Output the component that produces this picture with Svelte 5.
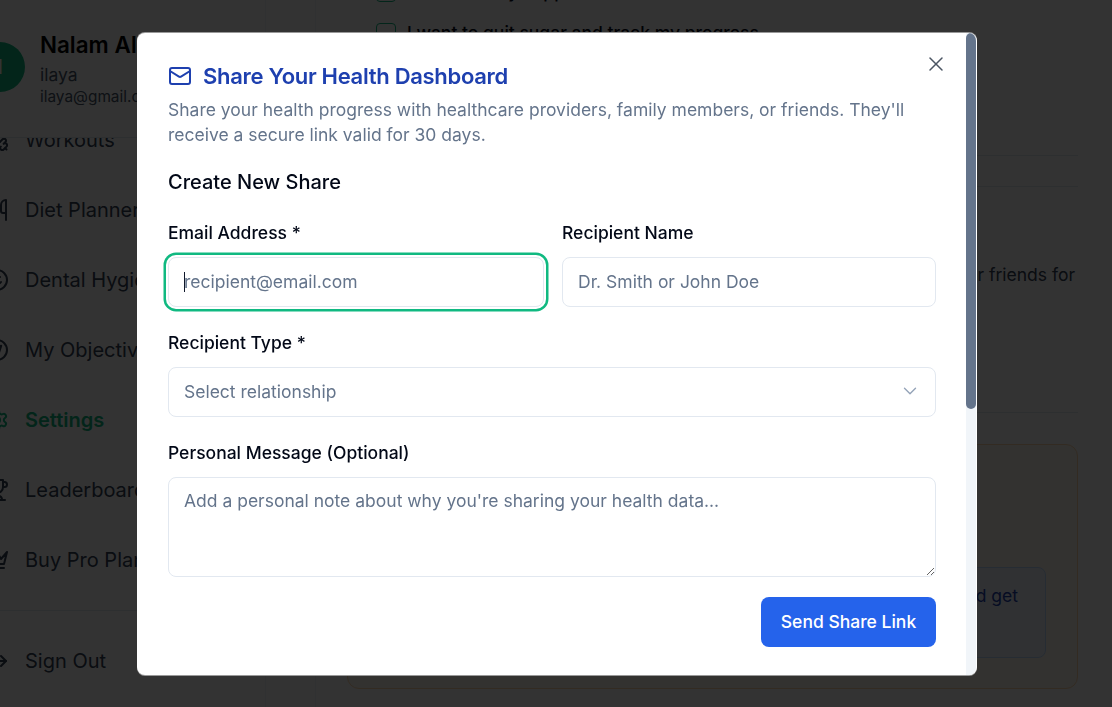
<script>
  const nav = [
    { label: 'Workouts', d: ['M14.4 14.4 9.6 9.6','M18.657 21.485a2 2 0 1 1-2.829-2.828l-1.767 1.768a2 2 0 1 1-2.829-2.829l6.364-6.364a2 2 0 1 1 2.829 2.829l-1.768 1.767a2 2 0 1 1 2.828 2.829z','m21.5 21.5-1.4-1.4','M3.9 3.9 2.5 2.5','M6.404 12.768a2 2 0 1 1-2.829-2.829l1.768-1.767a2 2 0 1 1-2.828-2.829l2.828-2.828a2 2 0 1 1 2.829 2.828l1.767-1.768a2 2 0 1 1 2.829 2.829z'] },
    { label: 'Diet Planner', d: ['M3 2v7c0 1.1.9 2 2 2h4a2 2 0 0 0 2-2V2','M7 2v20','M21 15V2a5 5 0 0 0-5 5v6c0 1.1.9 2 2 2h3Zm0 0v7'] },
    { label: 'Dental Hygiene', d: ['M12 2a10 10 0 1 0 0 20a10 10 0 1 0 0-20z','M8 14s1.5 2 4 2 4-2 4-2','M9 9h.01','M15 9h.01'] },
    { label: 'My Objectives', d: ['M12 2a10 10 0 1 0 0 20a10 10 0 1 0 0-20z','m16.24 7.76-2.12 6.36-6.36 2.12 2.12-6.36 6.36-2.12z'] },
    { label: 'Settings', active: true, d: ['M12.22 2h-.44a2 2 0 0 0-2 2v.18a2 2 0 0 1-1 1.73l-.43.25a2 2 0 0 1-2 0l-.15-.08a2 2 0 0 0-2.73.73l-.22.38a2 2 0 0 0 .73 2.73l.15.1a2 2 0 0 1 1 1.72v.51a2 2 0 0 1-1 1.74l-.15.09a2 2 0 0 0-.73 2.73l.22.38a2 2 0 0 0 2.73.73l.15-.08a2 2 0 0 1 2 0l.43.25a2 2 0 0 1 1 1.73V20a2 2 0 0 0 2 2h.44a2 2 0 0 0 2-2v-.18a2 2 0 0 1 1-1.73l.43-.25a2 2 0 0 1 2 0l.15.08a2 2 0 0 0 2.73-.73l.22-.39a2 2 0 0 0-.73-2.73l-.15-.08a2 2 0 0 1-1-1.74v-.5a2 2 0 0 1 1-1.74l.15-.09a2 2 0 0 0 .73-2.73l-.22-.38a2 2 0 0 0-2.73-.73l-.15.08a2 2 0 0 1-2 0l-.43-.25a2 2 0 0 1-1-1.73V4a2 2 0 0 0-2-2z','M12 9a3 3 0 1 0 0 6a3 3 0 1 0 0-6z'] },
    { label: 'Leaderboard', d: ['M6 9H4.5a2.5 2.5 0 0 1 0-5H6','M18 9h1.5a2.5 2.5 0 0 0 0-5H18','M4 22h16','M10 14.66V17c0 .55-.47.98-.97 1.21C7.85 18.75 7 20.24 7 22','M14 14.66V17c0 .55.47.98.97 1.21C16.15 18.75 17 20.24 17 22','M18 2H6v7a6 6 0 0 0 12 0V2Z'] },
    { label: 'Buy Pro Plan', d: ['m2 4 3 12h14l3-12-6 7-4-7-4 7-6-7zm3 16h14'] }
  ];
</script>

<div class="page">
  <aside class="sidebar">
    <div class="profile">
      <div class="avatar">I</div>
      <div class="who">
        <div class="name">Nalam AI User</div>
        <div class="user">ilaya</div>
        <div class="mail">ilaya@gmail.com</div>
      </div>
    </div>
    <nav class="nav">
      {#each nav as item}
        <div class="item" class:active={item.active}>
          <svg viewBox="0 0 24 24" width="24" height="24" fill="none" stroke="currentColor" stroke-width="2" stroke-linecap="round" stroke-linejoin="round">
            {#each item.d as d}<path {d} />{/each}
          </svg>
          <span>{item.label}</span>
        </div>
      {/each}
    </nav>
    <div class="foot">
      <div class="item">
        <svg viewBox="0 0 24 24" width="24" height="24" fill="none" stroke="currentColor" stroke-width="2" stroke-linecap="round" stroke-linejoin="round">
          <path d="M9 21H5a2 2 0 0 1-2-2V5a2 2 0 0 1 2-2h4" /><path d="m16 17 5-5-5-5" /><path d="M21 12H9" />
        </svg>
        <span>Sign Out</span>
      </div>
    </div>
  </aside>

  <main class="main">
    <div class="checks">
      <label class="check"><span class="box"></span><span>I want to stay happier</span></label>
      <label class="check"><span class="box"></span><span>I want to quit sugar and track my progress</span></label>
    </div>
    <div class="rule first"></div>
    <div class="rule second"></div>
    <p class="lead">Share your health progress with healthcare providers or friends for</p>
    <div class="rule third"></div>
    <section class="card">
      <div class="note">Share your dashboard and get</div>
    </section>
  </main>
</div>

<div class="overlay"></div>

<div class="modal" role="dialog" aria-modal="true">
  <div class="body">
    <button class="close" aria-label="Close">
      <svg viewBox="0 0 24 24" width="24" height="24" fill="none" stroke="currentColor" stroke-width="1.5" stroke-linecap="round" stroke-linejoin="round"><path d="M18 6 6 18" /><path d="m6 6 12 12" /></svg>
    </button>
    <h2 class="title">
      <svg viewBox="0 0 24 24" width="24" height="24" fill="none" stroke="currentColor" stroke-width="2" stroke-linecap="round" stroke-linejoin="round"><rect x="2" y="4" width="20" height="16" rx="2" /><path d="m22 7-8.97 5.7a1.94 1.94 0 0 1-2.06 0L2 7" /></svg>
      Share Your Health Dashboard
    </h2>
    <p class="desc">Share your health progress with healthcare providers, family members, or friends. They'll receive a secure link valid for 30 days.</p>
    <h3 class="sub">Create New Share</h3>

    <div class="two">
      <div class="field">
        <label for="em">Email Address *</label>
        <div class="focus-wrap">
          <input id="em" class="ctl focused" placeholder="recipient@email.com" />
          <span class="caret"></span>
        </div>
      </div>
      <div class="field">
        <label for="rn">Recipient Name</label>
        <input id="rn" class="ctl" placeholder="Dr. Smith or John Doe" />
      </div>
    </div>

    <div class="field">
      <label for="rt">Recipient Type *</label>
      <button id="rt" class="ctl select">
        <span>Select relationship</span>
        <svg viewBox="0 0 24 24" width="22" height="22" fill="none" stroke="currentColor" stroke-width="1.5" stroke-linecap="round" stroke-linejoin="round"><path d="m6 9 6 6 6-6" /></svg>
      </button>
    </div>

    <div class="field">
      <label for="pm">Personal Message (Optional)</label>
      <textarea id="pm" class="ctl area" placeholder="Add a personal note about why you're sharing your health data..."></textarea>
    </div>

    <div class="actions"><button class="send">Send Share Link</button></div>
  </div>
  <div class="track"><div class="thumb"></div></div>
</div>

<style>
  :global(body) { margin: 0; background: #fff; font-family: Inter, "Liberation Sans", sans-serif; }
  * { box-sizing: border-box; }

  .page { display: flex; height: 707px; overflow: hidden; background: #fff; color: #0f172a; }

  .sidebar { flex: 0 0 266px; display: flex; flex-direction: column; border-right: 1px solid #f1f5f9; overflow: hidden; }
  .profile { flex: 0 0 138px; display: flex; align-items: flex-start; gap: 15px; margin-left: -25px; padding-top: 42px; border-bottom: 1px solid #e2e8f0; }
  .avatar { flex: 0 0 50px; height: 50px; border-radius: 50%; background: #10b981; color: #fff; display: flex; align-items: center; justify-content: center; font-size: 20px; font-weight: 600; }
  .who { margin-top: -11px; white-space: nowrap; }
  .name { font-size: 22.4px; font-weight: 600; line-height: 28px; color: #000; }
  .user { font-size: 17.5px; line-height: 24px; margin-top: 4px; color: #475569; }
  .mail { font-size: 15.4px; line-height: 20px; color: #475569; }

  .nav { flex: 1; overflow: hidden; border-bottom: 1px solid #e2e8f0; }
  .nav .item:first-child { margin-top: -33px; }
  .item { height: 70px; display: flex; align-items: center; gap: 16px; margin-left: -15px; font-size: 20px; color: #334155; white-space: nowrap; }
  .item svg { flex: 0 0 24px; }
  .item.active { color: #10b981; font-weight: 600; }
  .foot { flex: 0 0 96px; padding-top: 15px; }

  .main { flex: 1; margin-left: 49px; border-left: 1px solid #f1f5f9; padding: 0 34px 0 31px; min-width: 0; }
  .checks { margin-top: -18px; padding-left: 29px; display: flex; flex-direction: column; gap: 21px; }
  .check { display: flex; align-items: center; gap: 11px; height: 20px; font-size: 17.5px; font-weight: 500; white-space: nowrap; }
  .box { flex: 0 0 20px; height: 20px; border: 1px solid #10b981; border-radius: 4px; }
  .rule { height: 1px; background: #e2e8f0; }
  .first { margin-top: 112px; }
  .second { margin-top: 30px; }
  .lead { margin: 76px 0 0; padding-right: 3px; text-align: right; white-space: nowrap; font-size: 17.5px; line-height: 24px; color: #334155; }
  .third { margin-top: 125px; }
  .card { margin-top: 31px; height: 245px; border: 1px solid #fed7aa; border-radius: 12px; background: #fff7ed; padding: 122px 31px 0; }
  .note { height: 91px; border: 1px solid #bfdbfe; border-radius: 8px; background: #eff6ff; padding: 16px 27px 0; text-align: right; font-size: 17.5px; line-height: 24px; color: #1e40af; white-space: nowrap; }

  .overlay { position: fixed; inset: 0; background: rgba(0, 0, 0, 0.8); }

  .modal { position: fixed; left: 137px; top: 33px; width: 840px; height: 642px; background: #fff; border-right: 1px solid #fff; border-radius: 8px; overflow: hidden; box-shadow: 0 -1px 0 #999, 0 1px 0 #999; }
  .track { position: absolute; top: 0; right: 0; bottom: 0; width: 10px; background: #f1f5f9; }
  .thumb { height: 376px; background: #64748b; border-radius: 5px; }
  .body { position: relative; padding: 28px 40px 0 31px; }

  .close { position: absolute; top: 19px; right: 28px; width: 24px; height: 24px; padding: 0; border: 0; background: none; color: #4b5563; }
  .title { margin: 0; display: flex; align-items: center; gap: 11px; font-size: 22px; font-weight: 600; line-height: 30px; color: #1e40af; letter-spacing: -0.3px; }
  .desc { margin: 6px 0 0; font-size: 17.5px; line-height: 25px; color: #64748b; }
  .sub { margin: 21px 0 0; font-size: 20px; font-weight: 500; line-height: 28px; color: #020817; }

  .two { display: grid; grid-template-columns: 376px 1fr; gap: 18px; margin-top: 25px; }
  .two .field { margin-top: 0; }
  .field { display: flex; flex-direction: column; gap: 12px; margin-top: 24px; }
  label { font-size: 17.5px; font-weight: 500; line-height: 24px; color: #020817; }
  .ctl { display: block; width: 100%; height: 50px; padding: 0 15px 2px; background: #fff; border: 1px solid #e2e8f0; border-radius: 8px; font: inherit; font-size: 17.5px; color: #0f172a; outline: none; }
  .ctl::placeholder { color: #64748b; opacity: 1; }
  .focus-wrap { position: relative; }
  .focused { box-shadow: 0 0 0 2px #fff, 0 0 0 4.5px #10b981; border-color: #e2e8f0; }
  .caret { position: absolute; left: 16px; top: 15px; width: 1px; height: 20px; background: #0f172a; }
  .select { display: flex; align-items: center; justify-content: space-between; color: #64748b; text-align: left; }
  .select svg { color: #94a3b8; margin-right: -1px; }
  .area { height: 100px; padding: 11px 15px; line-height: 24px; resize: vertical; }
  .actions { display: flex; justify-content: flex-end; margin-top: 20px; }
  .send { width: 175px; height: 50px; padding: 0 0 2px; border: 0; border-radius: 8px; background: #2563eb; color: #fff; font: inherit; font-size: 17.5px; font-weight: 500; }
</style>
